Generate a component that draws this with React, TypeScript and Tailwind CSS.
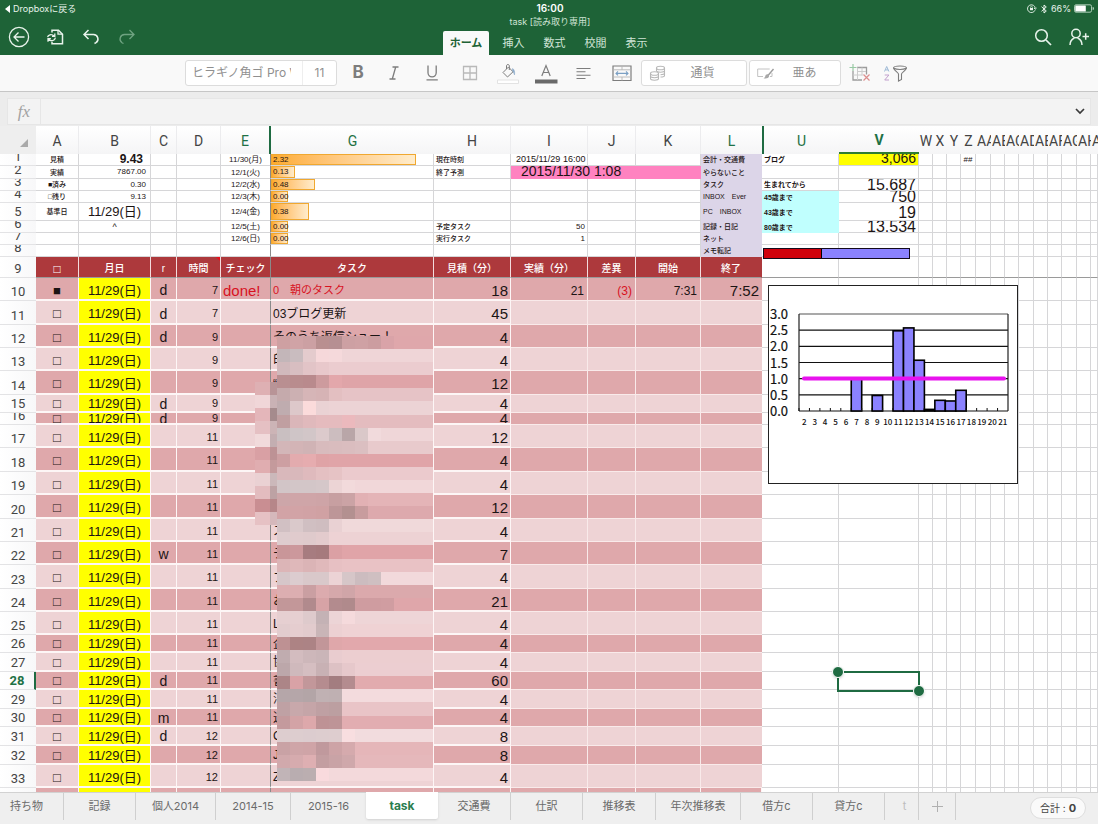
import React from "react";

const JP = "font-['Liberation_Sans','Noto_Sans_CJK_JP',sans-serif]";
const UI = "font-['Inter','Noto_Sans_CJK_JP',sans-serif]";

const GRID = "border-[#d6d6d8]";
const DARK = "bg-[#dfa8ab]";
const LIGHT = "bg-[#eed3d5]";

/* ---------- columns ---------- */

type Column = { name: string; width: string; tone?: string };

const columns: Column[] = [
  { name: "A", width: "w-[43px]" },
  { name: "B", width: "w-[72px]" },
  { name: "C", width: "w-[26px]" },
  { name: "D", width: "w-[44px]" },
  { name: "E", width: "w-[50px]", tone: "text-[#1f7145] border-r-2 border-[#1f6b42]" },
  { name: "G", width: "w-[163px]", tone: "text-[#1f7145]" },
  { name: "H", width: "w-[77px]" },
  { name: "I", width: "w-[77px]" },
  { name: "J", width: "w-[48px]" },
  { name: "K", width: "w-[65px]" },
  { name: "L", width: "w-[61px]", tone: "text-[#1f7145]" },
  { name: "U", width: "w-[77px]", tone: "text-[#1f7145] border-l-2 border-[#1f6b42]" },
  { name: "V", width: "w-[80px]", tone: "text-[#1f7145] font-bold border-b-2 border-[#2e7d32] bg-white" },
];

const narrowColumns: Column[] = [
  { name: "W", width: "w-[14px]" },
  { name: "X", width: "w-[14px]" },
  { name: "Y", width: "w-[14px]" },
  { name: "Z", width: "w-[15px]" },
  { name: "AA", width: "w-[15px]" },
  { name: "AB", width: "w-[14px]" },
  { name: "AC", width: "w-[14px]" },
  { name: "AD", width: "w-[15px]" },
  { name: "AE", width: "w-[14px]" },
  { name: "AF", width: "w-[14px]" },
  { name: "AG", width: "w-[15px]" },
  { name: "AH", width: "w-[14px]" },
  { name: "AI", width: "" },
];

/* ---------- cells ---------- */

type CellProps = {
  h: string;
  className?: string;
  line?: string;
  span?: number;
  children?: React.ReactNode;
  over?: React.ReactNode;
};

function Cell({ h, className = "", line = "border-r border-b " + GRID, span, children, over }: CellProps) {
  return (
    <td colSpan={span} className="relative p-0">
      <div className={`flex items-center overflow-hidden whitespace-nowrap leading-none ${h} ${line} ${className}`}>
        {children}
      </div>
      {over}
    </td>
  );
}

function RowLabel({ n, h, active }: { n?: number; h: string; active?: boolean }) {
  return (
    <th scope="row" className="p-0 font-normal">
      <div
        className={`flex items-end justify-center overflow-hidden border-b border-[#e3e3e5] bg-linear-to-r from-white to-[#f8f8f9] font-['Roboto',sans-serif] text-[13px] ${h} ${
          active ? "border-r-2 border-r-[#1f6b42] font-bold text-[#1f7145]" : "text-[#454545]"
        }`}
      >
        <span className="h-[17px] shrink-0 leading-[18px]">{n}</span>
      </div>
    </th>
  );
}

function NarrowCells({ h, line, z }: { h: string; line?: string; z?: string }) {
  return (
    <>
      {narrowColumns.map((c) => (
        <Cell key={c.name} h={h} line={line} className="justify-center text-[8px]">
          {c.name === "Z" ? z : null}
        </Cell>
      ))}
    </>
  );
}

/* ---------- summary rows 1-8 ---------- */

type Summary = {
  n: number;
  h: string;
  a?: string;
  b?: string;
  bClass?: string;
  e?: string;
  g?: string;
  bar?: string;
  hText?: string;
  i?: string;
  iClass?: string;
  l: string;
  u?: string;
  cyan?: boolean;
  v?: string;
  vClass?: string;
};

const summary: Summary[] = [
  { n: 1, h: "h-[12px]", a: "見積", b: "9.43", bClass: "justify-end pr-[7px] pb-[2px] text-xs font-bold", e: "11/30(月)", g: "2.32", bar: "w-[145px]", hText: "現在時刻", i: "2015/11/29 16:00", iClass: "pl-[5px] text-[9px]", l: "会計・交通費", u: "ブログ", v: "3,066", vClass: "bg-[#ffff00] pb-[4px] text-[14px]" },
  { n: 2, h: "h-[13px]", a: "実績", b: "7867.00", bClass: "justify-end pr-[4px] text-[8px]", e: "12/1(火)", g: "0.13", bar: "w-[24px]", hText: "終了予測", l: "やらないこと" },
  { n: 3, h: "h-[12px]", a: "■済み", b: "0.30", bClass: "justify-end pr-[4px] text-[8px]", e: "12/2(水)", g: "0.48", bar: "w-[44px]", l: "タスク", u: "生まれてから", v: "15.687", vClass: "pt-px text-[16px]" },
  { n: 4, h: "h-[12px]", a: "□残り", b: "9.13", bClass: "justify-end pr-[4px] text-[8px]", e: "12/3(木)", g: "0.00", bar: "w-[17px]", l: "INBOX　Ever", u: "45歳まで", cyan: true, v: "750", vClass: "text-[16px]" },
  { n: 5, h: "h-[18px]", a: "基準日", b: "11/29(日)", bClass: "justify-center text-[13px]", e: "12/4(金)", g: "0.38", bar: "w-[38px]", l: "PC　INBOX", u: "43歳まで", cyan: true, v: "19", vClass: "pt-[2px] text-[16px]" },
  { n: 6, h: "h-[12px]", b: "^", bClass: "justify-center pt-[2px] text-[9px]", e: "12/5(土)", g: "0.00", bar: "w-[17px]", hText: "予定タスク", i: "50", iClass: "justify-end pr-[2px] text-[8px]", l: "記録・日記", u: "80歳まで", cyan: true, v: "13.534", vClass: "pt-px text-[16px]" },
  { n: 7, h: "h-[12px]", e: "12/6(日)", g: "0.00", bar: "w-[17px]", hText: "実行タスク", i: "1", iClass: "justify-end pr-[2px] text-[8px]", l: "ネット" },
  { n: 8, h: "h-[12px]", l: "メモ転記" },
];

function SummaryRow({ r }: { r: Summary }) {
  return (
    <tr>
      <RowLabel n={r.n} h={r.h} />
      <Cell h={r.h} className="justify-center text-[7px] font-medium">{r.a}</Cell>
      <Cell h={r.h} className={r.bClass}>{r.b}</Cell>
      <Cell h={r.h} />
      <Cell h={r.h} />
      <Cell h={r.h} className="justify-center pt-px text-[8px]" line="border-r border-b border-[#d6d6d8] border-r-[#8a8a8a]">{r.e}</Cell>
      <Cell h={r.h} className="text-[8px]">
        {r.g && (
          <span className={`flex h-full shrink-0 items-center border border-[#f0a830] bg-linear-to-r from-[#fdab2b] to-[#ffeccb] pl-px ${r.bar}`}>
            {r.g}
          </span>
        )}
      </Cell>
      <Cell h={r.h} className="pl-[2px] text-[7px] font-medium">{r.hText}</Cell>
      {r.n === 2 ? (
        <Cell h={r.h} span={3} line="" className="bg-[#ff82c0] pb-[3px] pl-[10px] text-[14px]">2015/11/30 1:08</Cell>
      ) : (
        <>
          <Cell h={r.h} className={r.iClass}>{r.i}</Cell>
          <Cell h={r.h} />
          <Cell h={r.h} />
        </>
      )}
      <Cell h={r.h} line="" className="bg-[#dcd5e8] pb-px pl-[2px] text-[7px] font-medium">{r.l}</Cell>
      <Cell h={r.h} line={r.cyan ? "" : undefined} className={`pl-[2px] text-[7px] font-bold ${r.cyan ? "bg-[#c0fffe]" : ""}`}>{r.u}</Cell>
      <Cell h={r.h} className={`justify-end pr-[2px] ${r.vClass ?? ""}`}>{r.v}</Cell>
      <NarrowCells h={r.h} z={r.n === 1 ? "##" : undefined} />
    </tr>
  );
}

/* ---------- title row 9 ---------- */

const titles = ["□", "月日", "r", "時間", "チェック", "タスク", "見積（分）", "実績（分）", "差異", "開始", "終了"];

function TitleRow() {
  const h = "h-[21px]";
  return (
    <tr>
      <RowLabel n={9} h={h} />
      {titles.map((t, i) => (
        <Cell
          key={t}
          h={h}
          line={`border-r border-b border-b-[#9a9a9a] ${i === 4 ? "border-r-[#8a8a8a]" : i === 10 ? "border-r-[#ad393c]" : "border-r-[#f3dcdd]"}`}
          className={`justify-center bg-[#ad393c] pt-[3px] font-medium text-white ${i === 0 ? "text-xs" : "text-[10px]"}`}
          over={
            t === "時間" && (
              <svg className="absolute top-0 right-px" width="4" height="4" viewBox="0 0 4 4" aria-hidden="true">
                <path d="M0 0h4v4z" fill="#e8101c" />
              </svg>
            )
          }
        >
          {t}
        </Cell>
      ))}
      <Cell h={h} line="border-r border-b border-[#d6d6d8] border-b-[#9a9a9a]" />
      <Cell h={h} line="border-r border-b border-[#d6d6d8] border-b-[#9a9a9a]" />
      <NarrowCells h={h} line="border-r border-b border-[#d6d6d8] border-b-[#9a9a9a]" />
    </tr>
  );
}

/* ---------- task rows ---------- */

type Task = { n: number; h: string; repeat?: string; hour: string; task: string; plan: string };

const H23 = "h-[23px] pt-[3px]";
const H24 = "h-[24px] pt-[3px]";
const H18 = "h-[18px] pt-px";
const H19 = "h-[19px] pt-px";

const tasks: Task[] = [
  { n: 10, h: H23, repeat: "d", hour: "7", task: "0　朝のタスク", plan: "18" },
  { n: 11, h: H24, repeat: "d", hour: "7", task: "03ブログ更新", plan: "45" },
  { n: 12, h: H23, repeat: "d", hour: "9", task: "そのうち返信シュー！", plan: "4" },
  { n: 13, h: H23, hour: "9", task: "印", plan: "4" },
  { n: 14, h: H24, hour: "9", task: "“", plan: "12" },
  { n: 15, h: H18, repeat: "d", hour: "9", task: "", plan: "4" },
  { n: 16, h: "h-[12px] pt-px", repeat: "d", hour: "9", task: "", plan: "4" },
  { n: 17, h: H23, hour: "11", task: "", plan: "12" },
  { n: 18, h: H24, hour: "11", task: "", plan: "4" },
  { n: 19, h: H23, hour: "11", task: "", plan: "4" },
  { n: 20, h: H24, hour: "11", task: "", plan: "12" },
  { n: 21, h: H23, hour: "11", task: "ス", plan: "4" },
  { n: 22, h: H23, repeat: "w", hour: "11", task: "テ", plan: "7" },
  { n: 23, h: H24, hour: "11", task: "フ", plan: "4" },
  { n: 24, h: H23, hour: "11", task: "お", plan: "21" },
  { n: 25, h: H23, hour: "11", task: "L", plan: "4" },
  { n: 26, h: H18, hour: "11", task: "企", plan: "4" },
  { n: 27, h: H19, hour: "11", task: "協", plan: "4" },
  { n: 28, h: H18, repeat: "d", hour: "11", task: "書", plan: "60" },
  { n: 29, h: H19, hour: "11", task: "消", plan: "4" },
  { n: 30, h: H18, repeat: "m", hour: "11", task: "送", plan: "4" },
  { n: 31, h: H19, repeat: "d", hour: "12", task: "C", plan: "8" },
  { n: 32, h: H19, hour: "12", task: "J", plan: "8" },
  { n: 33, h: H23, hour: "12", task: "Z", plan: "4" },
];

function Selection() {
  return (
    <div className="absolute -top-px -left-[2px] z-10 h-[21px] w-[83px] border-2 border-[#1f6b42]">
      <span className="absolute -top-[7px] -left-[7px] size-[12px] rounded-full border border-white bg-[#1f6b42] shadow" />
      <span className="absolute -right-[7px] -bottom-[7px] size-[12px] rounded-full border border-white bg-[#1f6b42] shadow" />
    </div>
  );
}

function TaskRow({ t }: { t: Task }) {
  const bg = t.n % 2 === 0 ? DARK : LIGHT;
  const done = t.n === 10;
  const thick = "border-r border-b-2 border-[#fdf6f6]";
  const thin = "border-r border-b border-[#f9eaea]";
  return (
    <tr>
      <RowLabel n={t.n} h={t.h} active={t.n === 28} />
      <Cell h={t.h} line={thick} className={`justify-center text-[13px] ${bg}`}>{done ? "■" : "□"}</Cell>
      <Cell h={t.h} line={thick} className="justify-center bg-[#ffff00] text-[13px]">11/29(日)</Cell>
      <Cell h={t.h} line={thick} className={`justify-center text-[14px] ${bg}`}>{t.repeat}</Cell>
      <Cell h={t.h} line={thick} className={`justify-end pr-[2px] text-[11px] ${bg}`}>{t.hour}</Cell>
      <Cell h={t.h} line="border-r border-b-2 border-[#fdf6f6] border-r-[#8a8a8a]" className={`pl-[2px] text-[15px] text-[#d8121f] ${bg}`}>{done && "done!"}</Cell>
      <Cell h={t.h} line={thick} className={`pl-[2px] ${done ? "text-[11px] text-[#d8121f]" : "text-xs"} ${bg}`}>{t.task}</Cell>
      <Cell h={t.h} line={thick} className={`justify-end pr-[2px] text-[15px] ${bg}`}>{t.plan}</Cell>
      <Cell h={t.h} line={thin} className={`justify-end pr-[3px] text-xs ${bg}`}>{done && "21"}</Cell>
      <Cell h={t.h} line={thin} className={`justify-end pr-[3px] text-xs text-[#d8121f] ${bg}`}>{done && "(3)"}</Cell>
      <Cell h={t.h} line={thin} className={`justify-end pr-[3px] text-xs ${bg}`}>{done && "7:31"}</Cell>
      <Cell h={t.h} line="border-b border-[#f9eaea]" className={`justify-end pr-[3px] text-[15px] ${bg}`}>{done && "7:52"}</Cell>
      <Cell h={t.h} />
      <Cell h={t.h} over={t.n === 28 && <Selection />} />
      <NarrowCells h={t.h} />
    </tr>
  );
}

/* The sliver of row 34 that shows above the sheet tabs. */
function PeekRow() {
  const h = "h-[6px]";
  return (
    <tr>
      <RowLabel h={h} />
      <Cell h={h} line="border-r border-[#fdf6f6]" className={DARK} />
      <Cell h={h} line="border-r border-[#fdf6f6]" className="bg-[#ffff00]" />
      {columns.slice(2, 11).map((c) => (
        <Cell key={c.name} h={h} line={`border-r ${c.name === "E" ? "border-[#8a8a8a]" : "border-[#fdf6f6]"}`} className={DARK} />
      ))}
      <Cell h={h} />
      <Cell h={h} />
      <NarrowCells h={h} />
    </tr>
  );
}

/* ---------- mosaic over private task names ---------- */

const mosaic: string[] = [
  "cea0a2 d0a3a6 cca0a3 b98f90 b68f92 cda0a3 cfa1a4 cc9da0 d9a3a8 dfa7ab",
  "c3b6b9 c9bcbf e4cbcd f6d8da f5d9db efd5d7",
  "d1b9bc d8bec1 e2c4c7 e8c8cb ebcccf",
  "b98f91 b98c8e b98a8d cd9b9e e3a7ab dfa4a8",
  "c5aaac ccb0b2 d6b5b7 d6b3b5 e3bfc1 e6c3c6",
  "bfacaf ddc8ca fbdbdb ead2d4 ecd3d5",
  "c09fa1 dab6b9 e0b9bc e5bbbe e5bbbe ebb9bd e4bcbf",
  "c9bfc1 cfc5c7 d2c6c8 dccacc ccbdbf b9a6a8 dac8c9 f1dadc efd6d8",
  "d3b6b8 d3b4b6 d0b3b5 d8bbbd d9bcbe dabdbf dbbfc1 e8cacc",
  "cd9fa2 e3abae e6acaf dfa3a6 e0a4a8",
  "d9b8bb d9b8bb dfbabd e4c0c2 e6c3c5 ebcacd",
  "d2c5c7 d3c6c8 d3c6c8 d5c7c9 ecd4d5 f2dadb f1d7d9",
  "cda6a9 cfa5a8 cfa5a8 cea4a7 c79fa1 cba3a5 e2b1b4 e4b4b7",
  "d2a3a6 d2a3a6 d1a2a5 d0a1a3 bd9698 b39090 c89c9e dda9ad",
  "d1c0c3 dac9cb d0bfc2 cfbdc0 e9d1d3 f0d9da",
  "deccce e0cbcd dfcacc e3cbcd edd2d4",
  "c99699 cc989c a77c80 a67a7d dba0a4 e0a4a8",
  "dcb5b7 dfb8ba dbb4b6 e0b9bb e7c0c3 e9c2c5",
  "d6c6c9 dccccf d9c8ca d9c8ca ecd3d5 d6c6c8 ccbcbf cfbfc1 f2d9db",
  "dcaeb1 dcaeb1 ca9fa2 dcabae d5a8ab d0a5a8 dba9ac",
  "c29799 c39799 b18a8d d7a3a6 b38b8e b08a8c cf9ca0 cf9ca0 d09da1 dfa6aa",
  "e6cfd1 e6cfd1 decacc c4b2b5 ecd4d6 f5dadc eed5d7",
  "e2ccce e5cdcf e2cbcd c9b5b7 ecd0d2 efd2d4",
  "be9193 ad8384 ac8385 c29699 dfa7aa e2a8ac",
  "c0acaf d3bcbf cdb7ba cab5b8 e9cccf ecced0",
  "bca7aa cfb9bc d5bec1 c8b1b4 ddc1c4 e6c8cb ecced1",
  "ac8587 d9a2a6 c2979a b58c8f a37d80 b48c8f e2abae",
  "b5a6a9 b5a6a9 b3a5a7 c0b1b3 bfb0b2 f3dbdd",
  "bfa1a4 c8a8ab c5a5a8 bfa0a3 bc9fa1 e9c4c7",
  "c49a9d d3a3a6 dda8ab be9295 be9497 e2adb1",
  "ddcdcf ddcdcf dccccf ddcdcf decdcf f8dee0 f2dcde",
  "c9a2a5 cfa5a8 cfa4a7 c0999d cda3a6 d5aaad e5b6b9",
  "d1a9ac d6abae deafb2 c39ea1 c9a3a6 cfa8ab e5b8bb",
  "c1b4b7 b9adb0 bbaeb0 f9dadd f3d9db",
];

const sideMosaic: [string, string][] = [
  ["#deb0b3", "#b89497"],
  ["#f0d6d8", "#c9b2b5"],
  ["#e4b6ba", "#a58b8d"],
  ["#e5c0c3", "#ccb4b6"],
  ["#f1dadb", "#c3aeb1"],
  ["#d9a0a4", "#bd9295"],
  ["#e0adb0", "#c49a9c"],
  ["#ead1d3", "#cbb8ba"],
  ["#e3bcbf", "#bda2a4"],
  ["#c98e92", "#b68689"],
  ["#e6c1c4", "#d5b8bb"],
];

function Mosaic() {
  return (
    <>
      <svg className="absolute top-[210px] left-[277px] h-[445px] w-[156px]" viewBox="0 0 12 34" preserveAspectRatio="none" shapeRendering="crispEdges" aria-hidden="true">
        {mosaic.map((row, y) => {
          const cells = row.split(" ");
          return cells.map((c, x) => (
            <rect key={`${x}-${y}`} x={x} y={y} width={x === cells.length - 1 ? 12 - x : 1} height={1} fill={`#${c}`} />
          ));
        })}
      </svg>
      <svg className="absolute top-[256px] left-[255px] h-[143px] w-[22px]" viewBox="0 0 22 143" shapeRendering="crispEdges" aria-hidden="true">
        {sideMosaic.map(([a, b], y) => (
          <g key={y}>
            <rect x={0} y={y * 13} width={15} height={13} fill={a} />
            <rect x={15} y={y * 13} width={7} height={13} fill={b} />
          </g>
        ))}
      </svg>
    </>
  );
}

/* ---------- chart ---------- */

const hours: [number, number][] = [
  [2, 0], [3, 0], [4, 0], [5, 0], [6, 0], [7, 1], [8, 0], [9, 0.48], [10, 0], [11, 2.48],
  [12, 2.57], [13, 1.57], [14, 0.05], [15, 0.33], [16, 0.31], [17, 0.64], [18, 0], [19, 0], [20, 0], [21, 0],
];

function Chart() {
  const left = 31;
  const bottom = 126;
  const unit = 97 / 3;
  const slot = 209 / 20;
  return (
    <svg className="absolute top-[159px] left-[768px] h-[199px] w-[250px]" viewBox="0 0 250 199" role="img" aria-label="時間別グラフ">
      <rect x="0.5" y="0.5" width="249" height="198" fill="#fff" stroke="#222" />
      {[0, 0.5, 1, 1.5, 2, 2.5, 3].map((v) => (
        <g key={v}>
          <line x1={left} x2={left + 209} y1={bottom - v * unit} y2={bottom - v * unit} stroke={v === 3 ? "#555" : "#111"} strokeWidth="1.2" />
          <text x="2" y={bottom - v * unit + 5} fontSize="13" fill="#111" stroke="#111" strokeWidth="0.2" fontFamily="'Noto Sans CJK JP', sans-serif">{v.toFixed(1)}</text>
        </g>
      ))}
      <path d={`M${left} 29V126M${left + 209} 29V126`} stroke="#222" strokeWidth="1.2" />
      {hours.map(([h, v], i) => (
        <g key={h}>
          <line x1={left + i * slot} x2={left + i * slot} y1={bottom - 3} y2={bottom} stroke="#111" />
          {v > 0 && (
            <rect x={left + i * slot} y={bottom - v * unit} width={slot} height={v * unit} fill="#8b82ff" stroke="#000" strokeWidth="1.6" />
          )}
          <text x={left + (i + 0.5) * slot} y="140" fontSize="8" fontWeight="500" fill="#111" textAnchor="middle" fontFamily="'Noto Sans CJK JP', sans-serif">{h}</text>
        </g>
      ))}
      <line x1="36" x2="236" y1="93.5" y2="93.5" stroke="#e812ee" strokeWidth="4" strokeLinecap="round" />
    </svg>
  );
}

/* ---------- toolbar icons ---------- */

function Icon({ label, className, children, w = 24, h = 24 }: { label: string; className?: string; children: React.ReactNode; w?: number; h?: number }) {
  return (
    <button type="button" aria-label={label} className={`flex items-center justify-center ${className ?? ""}`}>
      <svg width={w} height={h} viewBox={`0 0 ${w} ${h}`} fill="none" stroke="currentColor" strokeWidth="1.3" aria-hidden="true">
        {children}
      </svg>
    </button>
  );
}

function TopBar() {
  const tabs = ["挿入", "数式", "校閲", "表示"];
  return (
    <header className="grid h-[55px] shrink-0 grid-cols-3 bg-[#1e6337] text-[#e8f3eb]">
      <div className="flex flex-col">
        <a href="#back" className="flex h-[17px] items-center pl-[5px] text-[9px]">
          <svg width="6" height="8" viewBox="0 0 6 8" aria-hidden="true"><path d="M5 0v8L0 4z" fill="#fff" /></svg>
          <span className="pl-[2px]">Dropboxに戻る</span>
        </a>
        <div className="flex h-[38px] items-center pt-[2px] pl-px">
          <Icon label="戻る" className="h-9 w-9">
            <circle cx="12" cy="12" r="9.6" />
            <path d="M17.5 12H7M11.5 7.5 7 12l4.500 4.500" />
          </Icon>
          <Icon label="ファイル" className="h-9 w-9">
            <path d="M9 7.500V5.200h6.500l4 4V18.700H9V17" strokeWidth="1.500" />
            <path d="M15 5.200v4h4.500" />
            <path d="M4.600 12.200c.4-2.300 3.600-3.800 6.800-1.200M11.800 8.500v2.900H9M12.400 12.600c-.6 3.400-4.300 4.300-7 1.400M5 16.700v-3h2.900" />
          </Icon>
          <Icon label="元に戻す" className="h-9 w-9">
            <path d="M9.500 5 5 9.500l4.500 4.500M5 9.500h9.500a4.500 4.500 0 0 1 2.500 8.200l-1.500.8" strokeWidth="1.500" />
          </Icon>
          <Icon label="やり直し" className="h-9 w-9 text-[#6fa381]">
            <path d="M14.500 5 19 9.500 14.500 14M19 9.500H9.500A4.500 4.500 0 0 0 7 17.700l1.500.8" />
          </Icon>
        </div>
      </div>
      <div className="flex flex-col items-center pl-[2px]">
        <span className="h-[16px] text-[10px] leading-[17px] font-semibold text-white">16:00</span>
        <span className="h-[15px] text-[9px] leading-[11px] text-[#cfe3d5]">task [読み取り専用]</span>
        <nav className="flex h-6 text-[11px] text-[#cfe3d5]">
          <button type="button" className="w-[46px] rounded-t-[2px] bg-[#f9f9f9] font-bold text-[#1e6337]">ホーム</button>
          <span className="w-1" />
          {tabs.map((t) => (
            <button key={t} type="button" className="w-[41px]">{t}</button>
          ))}
        </nav>
      </div>
      <div className="flex flex-col items-end">
        <div className="flex h-[17px] items-center gap-[3px] pr-[4px] text-[9px]">
          <svg width="10" height="9" viewBox="0 0 10 9" fill="none" stroke="#e8f3eb" strokeWidth="0.9" aria-hidden="true">
            <path d="M8 6.200A3.900 3.900 0 1 1 8.300 4.500M7 4l1.300 1.200L9.600 4" />
            <rect x="3" y="4" width="3" height="2.200" fill="#e8f3eb" stroke="none" />
            <path d="M3.600 4.200V3.200a.9.9 0 0 1 1.800 0v1" strokeWidth="0.600" />
          </svg>
          <svg width="8" height="10" viewBox="0 0 8 10" fill="none" stroke="#e8f3eb" strokeWidth="1" aria-hidden="true">
            <path d="M1.500 2.700 6.300 7 4 9V1l2.300 2L1.500 7.300" />
          </svg>
          <span>66%</span>
          <svg width="20" height="9" viewBox="0 0 20 9" aria-hidden="true">
            <rect x="0.500" y="0.800" width="17" height="7.400" rx="1.500" fill="none" stroke="#a9cbb4" />
            <rect x="1.300" y="1.600" width="10.500" height="5.800" rx="0.500" fill="#fff" />
            <path d="M18.600 3v3a1.500 1.500 0 0 0 0-3z" fill="#a9cbb4" />
          </svg>
        </div>
        <div className="flex h-[38px] items-center pt-[2px] pr-px">
          <Icon label="検索" className="h-9 w-9">
            <circle cx="10.500" cy="10.500" r="5.800" strokeWidth="1.500" />
            <path d="m15 15 5 5" strokeWidth="1.700" />
          </Icon>
          <Icon label="共有" className="h-9 w-9">
            <circle cx="9" cy="8.500" r="4.200" strokeWidth="1.500" />
            <path d="M3 20c0-4 2-6 4.500-7M15 20c0-4-2-6-4.500-7M15.500 11.500h6.500M18.700 8.200v6.600" strokeWidth="1.500" />
          </Icon>
        </div>
      </div>
    </header>
  );
}

function Toolbar() {
  const slot = "h-[30px] w-[38px]";
  const box = "flex h-[26px] items-center rounded-[3px] border border-[#dcdcdc] bg-white text-xs text-[#8f8f8f]";
  return (
    <div className="flex h-[37px] shrink-0 items-center justify-center border-b border-[#c6c6c6] bg-[#f9f9f9] text-[#7d7d7d]">
      <div className={`${box} w-[152px]`}>
        <select aria-label="フォント" className="h-full w-[109px] appearance-none overflow-hidden pl-[6px] outline-none">
          <option>ヒラギノ角ゴ Pro W3</option>
        </select>
        <span className="-ml-[4px] h-full w-[11px] bg-white" />
        <select aria-label="フォントサイズ" className="h-full flex-1 appearance-none border-l border-[#eeeeee] text-center outline-none">
          <option>11</option>
        </select>
      </div>
      <button type="button" aria-label="太字" className={`${slot} pl-[4px] text-[17px] font-bold`}>B</button>
      <Icon label="斜体" className={slot}>
        <path d="M10.500 6h6M7.500 18h6M13.700 6l-3.400 12" />
      </Icon>
      <Icon label="下線" className={slot}>
        <path d="M8 4.500v7.300a4 4 0 0 0 8.200 0V4.500M6.500 18.800h11.300" />
      </Icon>
      <Icon label="罫線" className={`${slot} text-[#b9b9b9]`}>
        <path d="M5.500 5.500h13v13h-13zM12 5.500v13M5.500 12h13" />
      </Icon>
      <Icon label="塗りつぶし" className={slot}>
        <path d="M7 11.500 12.500 6l4.500 4.800-5.500 5.200zM10.500 8V4.500a1.500 1.500 0 0 1 2.800 0V9" strokeWidth="1" />
        <path d="M16.500 7.500c2 .8 2.500 3.500 2 6.500-.8-2-1.200-3.500-2-4z" fill="#8aa9c8" stroke="#8aa9c8" strokeWidth="0.500" />
        <path d="M1.500 19h21v3.500h-21z" stroke="#e3e3e3" fill="#fff" strokeWidth="1" />
      </Icon>
      <Icon label="文字色" className={slot}>
        <path d="m7.800 15 4.200-10.500L16.200 15M9.200 11.500h5.600" strokeWidth="1.200" />
        <path d="M1 18.500h22.500v4H1z" fill="#6a6a6a" stroke="none" />
      </Icon>
      <Icon label="配置" className={slot}>
        <path d="M4.500 7.500h14M4.500 10.800h9M4.500 14.200h14M4.500 17.500h9" strokeWidth="1.100" />
      </Icon>
      <Icon label="セルの結合" className={slot}>
        <path d="M3 5h18v14.500H3z" strokeWidth="1.200" />
        <path d="M3 8.800h18M3 16h18M12 5v3.800M12 16v3.500" stroke="#b5b5b5" strokeWidth="0.900" />
        <path d="M6 12.400h12M8 10.400l-2 2 2 2M16 10.400l2 2-2 2" stroke="#7ba0c4" strokeWidth="1.100" />
      </Icon>
      <button type="button" className={`${box} mr-[2px] w-[106px]`}>
        <svg className="ml-[7px]" width="18" height="18" viewBox="0 0 18 18" fill="none" stroke="#b8b8b8" strokeWidth="1.100" aria-hidden="true">
          <ellipse cx="11.500" cy="4" rx="4" ry="1.800" />
          <path d="M7.500 4v2.500c0 1 2 1.700 4 1.700s4-.7 4-1.700V4M15.500 6.500V9c0 .9-2 1.700-4 1.700M15.500 9v2.500c0 .8-1.500 1.500-4 1.500" />
          <ellipse cx="5.500" cy="9.500" rx="4" ry="1.800" />
          <path d="M1.500 9.500V12c0 1 2 1.700 4 1.700s4-.7 4-1.700V9.500M1.500 12v2.500c0 1 2 1.700 4 1.700s4-.7 4-1.700V12" />
        </svg>
        <span className="flex-1 pr-[8px]">通貨</span>
      </button>
      <button type="button" className={`${box} w-[92px]`}>
        <svg className="ml-[7px]" width="18" height="14" viewBox="0 0 18 14" fill="none" stroke="#c2c2c2" aria-hidden="true">
          <path d="M6 10.500H.7V3h12" />
          <path d="M16.500 3 11 9.500" stroke="#9c9c9c" strokeWidth="1.400" />
          <path d="M11.500 8.500c-2-.5-3 .5-3.300 2-.2.900-.8 1.500-1.700 1.700 2.500.6 5 .2 5.700-2.200z" fill="#a8a8a8" stroke="none" />
          <path d="M15 7v3.500h-2" />
        </svg>
        <span className="flex-1 pr-[6px]">亜あ</span>
      </button>
      <Icon label="挿入と削除" className={slot}>
        <path d="M5 10v9h9M9 6.500h9.500v7" stroke="#9c9c9c" />
        <path d="M5 14h9.500M9.500 6.500V19M14 6.500v8M9 10.500h9" stroke="#cccccc" strokeWidth="1" />
        <path d="M1.500 6.500h7M5 3v7" stroke="#98c9a4" strokeWidth="1.200" />
        <path d="m15.500 13.500 6 6M21.500 13.500l-6 6" stroke="#dc8d8d" strokeWidth="1.200" />
      </Icon>
      <Icon label="並べ替えとフィルター" className="h-[30px] w-[34px]" w={26}>
        <path d="M1.500 10.500 3.700 5.500l2.200 5M2.400 8.900h2.700" stroke="#9db9d6" strokeWidth="1" />
        <path d="M1.700 14h4.200L1.700 19h4.300" stroke="#c2a0cd" strokeWidth="1" />
        <path d="M10.500 7c0-2.600 13-2.600 13 0 0 1.600-5 5-5 6V18.500l-3 1.500V13c0-1-5-4.400-5-6zM11 7.300c2.500 1.600 9.500 1.600 12 0" strokeWidth="1.100" />
      </Icon>
    </div>
  );
}

function FormulaBar() {
  return (
    <div className="h-[34px] shrink-0 bg-[#ececec] px-2 pt-[7px] pb-[2px]">
      <label className="flex h-[25px] items-center bg-[#f3f3f3] outline outline-[#e6e6e6]">
        <span className="flex h-full w-[33px] items-center justify-center border-r border-[#e6e6e6] font-['Liberation_Serif',serif] text-[17px] text-[#a2a2a2] italic">fx</span>
        <input aria-label="数式" className="h-full min-w-0 flex-1 bg-transparent px-2 text-xs outline-none" />
        <svg className="mr-[5px]" width="10" height="7" viewBox="0 0 10 7" fill="none" stroke="#3a3a3a" strokeWidth="1.700" aria-hidden="true"><path d="m1 1 4 4 4-4" /></svg>
      </label>
    </div>
  );
}

/* ---------- sheet ---------- */

function Sheet() {
  return (
    <main className="relative min-h-0 flex-1 overflow-hidden bg-white">
      <table className={`w-full table-fixed border-separate border-spacing-0 text-[#1c1414] ${JP}`}>
        <colgroup>
          <col className="w-[36px]" />
          {[...columns, ...narrowColumns].map((c) => (
            <col key={c.name} className={c.width} />
          ))}
        </colgroup>
        <thead>
          <tr className="font-['Roboto',sans-serif] text-[14px] text-[#444444]">
            <td className="p-0">
              <div className="flex h-7 items-center justify-end bg-[#eeeeee] pt-[6px] pr-2">
                <svg width="8" height="8" viewBox="0 0 8 8" aria-hidden="true"><path d="M8 0v8H0z" fill="#a9a9a9" /></svg>
              </div>
            </td>
            {columns.map((c) => (
              <th key={c.name} scope="col" className="p-0 font-normal">
                <div className={`flex h-7 items-center justify-center bg-linear-to-b from-white to-[#f5f5f6] pt-[3px] ${c.tone ?? "border-r border-[#ececee]"}`}>{c.name}</div>
              </th>
            ))}
            {narrowColumns.map((c, i) => (
              <th key={c.name} scope="col" className="p-0 font-normal">
                <div className={`flex h-7 items-center overflow-hidden bg-linear-to-b from-white to-[#f5f5f6] pt-[3px] ${i < 4 ? "justify-center" : "pl-px"}`}>{c.name}</div>
              </th>
            ))}
          </tr>
        </thead>
        <tbody>
          {summary.map((r) => <SummaryRow key={r.n} r={r} />)}
          <TitleRow />
          {tasks.map((t) => <TaskRow key={t.n} t={t} />)}
          <PeekRow />
        </tbody>
      </table>
      <Mosaic />
      <div className="absolute top-[122px] left-[763px] flex h-[11px] w-[147px] border border-[#120a1c] bg-[#8b82ff]">
        <span className="w-[58px] border-r border-black bg-[#d0000c]" />
      </div>
      <Chart />
    </main>
  );
}

const sheets: [string, string][] = [
  ["持ち物", "w-[64px] pr-[10px]"],
  ["記録", "w-[72px]"],
  ["個人2014", "w-[80px]"],
  ["2014-15", "w-[75px]"],
  ["2015-16", "w-[75px]"],
  ["task", "w-[72px]"],
  ["交通費", "w-[73px]"],
  ["仕訳", "w-[72px]"],
  ["推移表", "w-[73px]"],
  ["年次推移表", "w-[85px]"],
  ["借方c", "w-[72px]"],
  ["貸方c", "w-[72px]"],
  ["t", "w-[34px] pl-[6px] text-[#bdbdbd]"],
];

function SheetTabs() {
  return (
    <footer className="flex h-8 shrink-0 items-start border-t border-[#d2d2d2] bg-[#efefef] text-[11px] text-[#6b6b6b]">
      {sheets.map(([name, width]) => (
        <button
          key={name}
          type="button"
          className={`h-[27px] shrink-0 ${width} ${
            name === "task" ? "-mt-px rounded-b-[2px] bg-white text-xs font-bold text-[#2a7d4f] shadow-sm" : name === "2015-16" ? "" : "border-r border-[#cfcfcf]"
          }`}
        >
          {name}
        </button>
      ))}
      <button type="button" aria-label="シートを追加" className="flex h-[27px] w-[37px] items-center justify-center border-r border-[#cfcfcf]">
        <svg width="11" height="11" viewBox="0 0 11 11" stroke="#b0b0b0" aria-hidden="true"><path d="M0 5.500h11M5.500 0v11" /></svg>
      </button>
      <button type="button" className="mt-[4px] mr-3 ml-auto flex h-[22px] w-[56px] items-center justify-center gap-[3px] rounded-full border border-[#dedede] bg-[#fafafa] text-[10px] whitespace-nowrap text-[#444444]">
        <span>合計 :</span>
        <span className="text-[11px] font-bold">0</span>
      </button>
    </footer>
  );
}

export default function App() {
  return (
    <div className={`flex h-screen flex-col overflow-hidden bg-white ${UI}`}>
      <TopBar />
      <Toolbar />
      <FormulaBar />
      <Sheet />
      <SheetTabs />
    </div>
  );
}
